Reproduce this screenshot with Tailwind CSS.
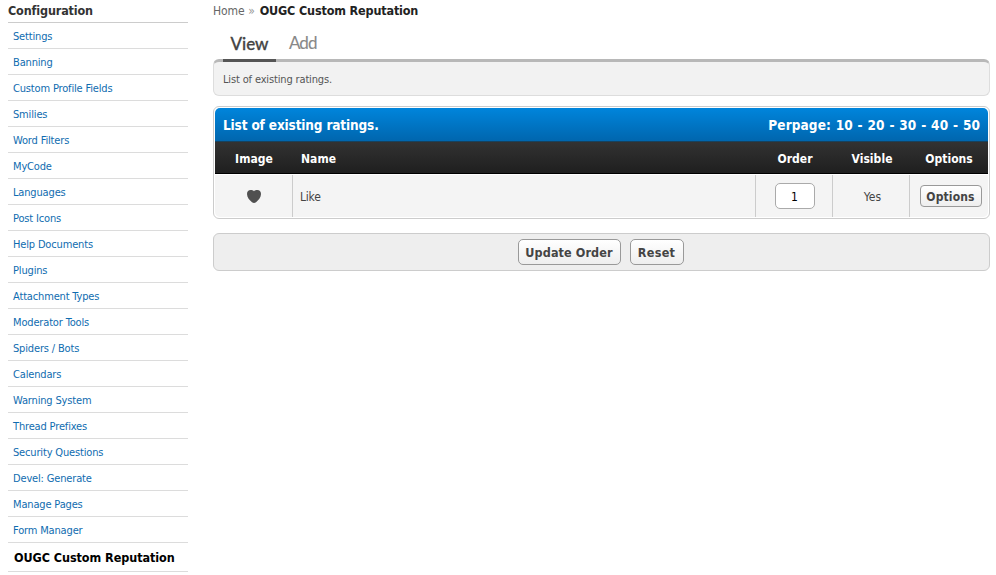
<!DOCTYPE html>
<html lang="en">
<head>
<meta charset="utf-8">
<title>OUGC Custom Reputation</title>
<script src="https://cdn.jsdelivr.net/npm/@tailwindcss/browser@4"></script>
</head>
<body class="bg-white w-[996px] h-[575px] overflow-hidden flex font-['DejaVu_Sans_Condensed','DejaVu_Sans',sans-serif] [font-stretch:condensed] text-[12px] text-[#444]">
<aside class="ml-2 w-[180px] shrink-0 whitespace-nowrap">
  <h2 class="h-[23px] border-b border-[#ccc] font-bold text-[12.5px] leading-[22px] text-[#333] tracking-[-0.15px]">Configuration</h2>
  <nav class="text-[11px] leading-[27px] tracking-[-0.16px] text-[#0f6cb0] [&>a]:block [&>a]:h-[26px] [&>a]:border-b [&>a]:border-[#dcdcdc] [&>a]:pl-[5px]">
    <a>Settings</a><a>Banning</a><a>Custom Profile Fields</a><a>Smilies</a><a>Word Filters</a><a>MyCode</a><a>Languages</a><a>Post Icons</a><a>Help Documents</a><a>Plugins</a><a>Attachment Types</a><a>Moderator Tools</a><a>Spiders / Bots</a><a>Calendars</a><a>Warning System</a><a>Thread Prefixes</a><a>Security Questions</a><a>Devel: Generate</a><a>Manage Pages</a><a>Form Manager</a>
  </nav>
  <div class="h-[29px] border-b border-[#dcdcdc] pl-[6px] font-bold text-[12.5px] leading-[30px] text-black tracking-[-0.06px]">OUGC Custom Reputation</div>
</aside>
<main class="ml-[25px] w-[777px] shrink-0 whitespace-nowrap">
  <div class="h-[27px] leading-[22px] text-[#666]"><span class="tracking-[-0.05px]">Home</span> <span class="text-[#999] mr-[1.5px]">»</span> <b class="text-[12.5px] text-[#222] tracking-[-0.16px]">OUGC Custom Reputation</b></div>
  <div class="h-[32px] flex pl-[10px] font-[Lato,sans-serif] text-[17px] leading-[33px]">
    <div class="relative z-10 h-[35px] w-[53px] text-center border-b-[3px] border-[#555] text-[#444] font-medium [-webkit-text-stroke:0.3px_#444]">View</div>
    <div class="ml-[13px] text-[17px] leading-[32px] text-[#888] tracking-[-0.95px] [-webkit-text-stroke:0.1px_#888]">Add</div>
  </div>
  <div class="h-[37px] border border-t-[3px] border-[#ddd] border-t-[#b8b8b8] rounded-[6px] bg-[#f2f2f2] pl-[9px] text-[11px] leading-[35px] tracking-[-0.15px] text-[#555]">List of existing ratings.</div>
  <section class="mt-[10px] h-[113px] border border-[#ccc] rounded-[6px] bg-white p-px">
    <div class="h-[33px] flex justify-between px-2 rounded-t-[5px] bg-linear-to-b from-[#0085dc] to-[#0066ae] font-bold text-[13.5px] leading-[34px] text-white"><span class="tracking-[-0.15px]">List of existing ratings.</span><span class="tracking-[0.1px] [word-spacing:0.45px]">Perpage: 10 - 20 - 30 - 40 - 50</span></div>
    <div class="h-[33px] grid grid-cols-[78px_463px_77px_77px_78px] border-t border-t-[#16425f] border-b border-b-black bg-linear-to-b from-[#323232] to-[#1f1f1f] font-bold leading-[34px] text-white text-center tracking-[0.05px]">
      <span>Image</span><span class="text-left pl-2">Name</span><span class="pl-px">Order</span><span class="pl-px">Visible</span><span>Options</span>
    </div>
    <div class="mt-px h-[42px] grid grid-rows-[42px] grid-cols-[78px_463px_77px_77px_78px] rounded-b-[5px] bg-[#f4f4f4] text-center leading-[44px] text-[12px] [&>div]:border-r [&>div]:border-[#ccc]">
      <div class="flex items-center justify-center"><svg class="w-[14px] h-[13px]" viewBox="0 0 14 13" fill="#505050"><path d="M7 1.200C8 .2 9.100 0 10.300 0 12.500 0 14 1.600 14 4c0 3.600-2.600 6.200-5 8.200Q7 13.600 5 12.200C2.600 10.200 0 7.600 0 4 0 1.600 1.500 0 3.700 0 4.900 0 6 .2 7 1.200Z"/></svg></div>
      <div class="text-left pl-[7px] tracking-[-0.2px]">Like</div>
      <div class="flex items-center justify-center pl-px"><span class="w-10 h-[26px] rounded-[5px] border border-[#aaa] bg-white text-black leading-[26px]">1</span></div>
      <div class="pl-[3px]">Yes</div>
      <div class="border-r-0! pl-[3px] flex items-center justify-center"><button class="w-[62px] h-[22px] rounded-[4px] border border-[#999] bg-linear-to-b from-white to-[#eee] font-bold text-[12px] leading-[22px] text-[#444] tracking-[0.15px]">Options</button></div>
    </div>
  </section>
  <div class="mt-[14px] h-[38px] border border-[#ccc] rounded-[6px] bg-[#eee] flex justify-center items-center gap-[9px] pr-[2px] font-bold text-[12.5px] leading-[25px] text-[#444] tracking-[0.1px]">
    <button class="w-[103px] h-[26px] rounded-[5px] border border-[#999] bg-linear-to-b from-white to-[#eee]">Update Order</button>
    <button class="w-[54px] h-[26px] rounded-[5px] border border-[#999] bg-linear-to-b from-white to-[#eee] tracking-[0.3px]">Reset</button>
  </div>
</main>
</body>
</html>
